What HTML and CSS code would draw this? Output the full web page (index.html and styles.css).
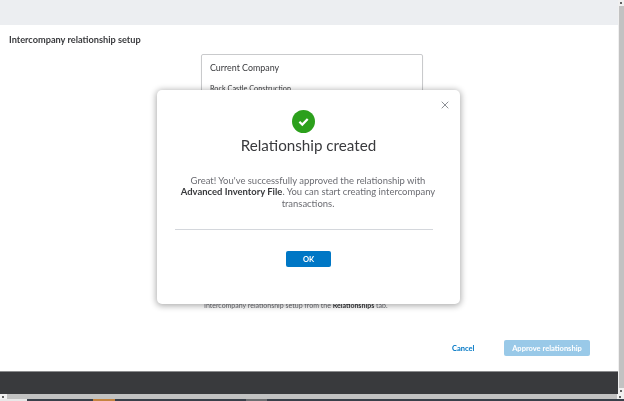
FILE: index.html
```html
<!DOCTYPE html>
<html lang="en">
<head>
<meta charset="utf-8">
<title>Intercompany relationship setup</title>
<link rel="stylesheet" href="styles.css">
</head>
<body>
<div class="window">
  <div class="viewport">
    <div class="page">
      <header class="topbar"></header>
      <main class="content">
        <h1 class="page-title">Intercompany relationship setup</h1>
        <section class="company-card">
          <h2 class="card-title">Current Company</h2>
          <p class="card-name">Rock Castle Construction</p>
        </section>
        <p class="hint">Intercompany relationship setup from the <b>Relationships</b> tab.</p>
        <div class="actions">
          <a class="cancel">Cancel</a>
          <button class="approve">Approve relationship</button>
        </div>
      </main>
      <footer class="footer"></footer>
    </div>
    <div class="vscroll">
      <span class="arrow up"></span>
      <span class="vthumb"></span>
      <span class="arrow down"></span>
    </div>
  </div>
  <div class="hscroll">
    <span class="harrow left"></span>
    <span class="htrack"></span>
    <span class="harrow right"></span>
  </div>
  <div class="taskbar">
    <span class="task-light"></span>
    <span class="task-gap"></span>
    <span class="task-orange"></span>
    <span class="task-gap2"></span>
    <span class="task-grey"></span>
  </div>

  <div class="modal" role="dialog">
    <svg class="close" viewBox="0 0 8 8" width="8" height="8"><path d="M.7.7l6.6 6.6M7.3.7L.7 7.3" fill="none" stroke="#8d9096" stroke-width="1"/></svg>
    <svg class="check" viewBox="0 0 23 23" width="23" height="23"><circle cx="11.5" cy="11.5" r="11.5" fill="#2ca01c"/><path d="M7.4 11.8l2.9 2.8 5.4-5.6" fill="none" stroke="#fff" stroke-width="2.2"/></svg>
    <h2 class="modal-title">Relationship created</h2>
    <p class="modal-text">Great! You've successfully approved the relationship with <b>Advanced Inventory File</b>. You can start creating intercompany transactions.</p>
    <hr class="rule">
    <button class="ok">OK</button>
  </div>
</div>
</body>
</html>
```
FILE: styles.css
```css
* { box-sizing: border-box; }
html, body { margin: 0; height: 100%; overflow: hidden; background: #fff; }
body { font-family: Lato, "Open Sans", "Liberation Sans", sans-serif; color: #393a3d; }

.window {
  position: relative;
  width: 624px;
  height: 401px;
  display: flex;
  flex-direction: column;
  filter: blur(0.45px);
}
.viewport { flex: 0 0 394px; display: flex; }
.page { width: 618px; display: flex; flex-direction: column; }
.topbar { flex: 0 0 25px; background: #eceef1; }

.content { flex: 1; position: relative; display: flex; flex-direction: column; min-height: 0; }
.page-title { margin: 9px 0 0 9px; font-size: 9.2px; line-height: 12px; font-weight: 700; letter-spacing: 0; color: #393a3d; }

.company-card {
  margin: 8px 0 0 201px;
  width: 222px;
  height: 229px;
  border: 1px solid #c9cacc;
  border-radius: 2px;
  padding: 7px 8px;
  box-shadow: 0 1px 1px rgba(0,0,0,.15);
}
.card-title { margin: 0; font-size: 8.9px; line-height: 12px; font-weight: 400; }
.card-name { margin: 9px 0 0; font-size: 7.3px; line-height: 11px; }

.hint { position: absolute; left: 204px; top: 276px; margin: 0; font-size: 7px; line-height: 9px; color: #6b6c72; white-space: nowrap; }
.hint b { color: #393a3d; }

.actions { position: absolute; left: 452px; top: 315px; display: flex; align-items: center; width: 138px; justify-content: space-between; }
.cancel { font-size: 7.5px; font-weight: 700; color: #0077c5; }
.approve {
  width: 86px; height: 16px; padding: 0; border: 0; border-radius: 2px;
  background: #99c9e8; color: #fff; font: 700 7.5px Lato, sans-serif;
}

.footer { flex: 0 0 23px; background: #393a3d; border-top: 1px solid #8b8c8e; }

.vscroll { flex: 0 0 6px; display: flex; flex-direction: column; align-items: stretch; background: #f0f0f0; }
.vthumb { flex: 1; background: #c2c2c2; margin: 0 0 0 1px; }
.arrow { flex: 0 0 6px; position: relative; }
.arrow.up::after, .arrow.down::after, .harrow::after {
  content: ""; position: absolute; width: 2px; height: 2px; background: #606060; left: 2px; top: 2px;
}

.hscroll { flex: 0 0 5px; display: flex; background: #f0f0f0; }
.htrack { flex: 1; background: #c2c2c2; }
.harrow { flex: 0 0 7px; position: relative; }

.taskbar { flex: 1; display: flex; background: #39404a; }
.task-light { width: 27px; background: #e8e8e8; }
.task-gap { width: 66px; }
.task-orange { width: 22px; background: #c58440; }
.task-gap2 { width: 131px; }
.task-grey { width: 21px; background: #6d6f72; }

.modal {
  position: absolute;
  left: 157px;
  top: 90px;
  width: 303px;
  height: 214px;
  background: #fff;
  border-radius: 5px;
  box-shadow: 0 1px 6px 1px rgba(0,0,0,.32);
  display: flex;
  flex-direction: column;
  align-items: center;
  padding-top: 20px;
}
.close { position: absolute; top: 11px; right: 11px; }
.check { display: block; margin-right: 10px; flex: none; }
.modal-title { margin: 1px 0 0; font-size: 15.2px; line-height: 22px; font-weight: 400; color: #393a3d; }
.modal-text { margin: 18.5px 0 0 -1px; width: 262px; text-align: center; font-size: 9.45px; line-height: 11.5px; color: #6b6c72; }
.modal-text b { color: #393a3d; }
.rule { margin: 20px 9px 0 0; width: 258px; height: 1px; border: 0; background: #d4d7dc; flex: none; }
.ok {
  margin-top: 21px; width: 45px; height: 16px; padding: 0; border: 0; border-radius: 2px;
  background: #0077c5; color: #fff; font: 700 7.5px Lato, sans-serif;
}
```
